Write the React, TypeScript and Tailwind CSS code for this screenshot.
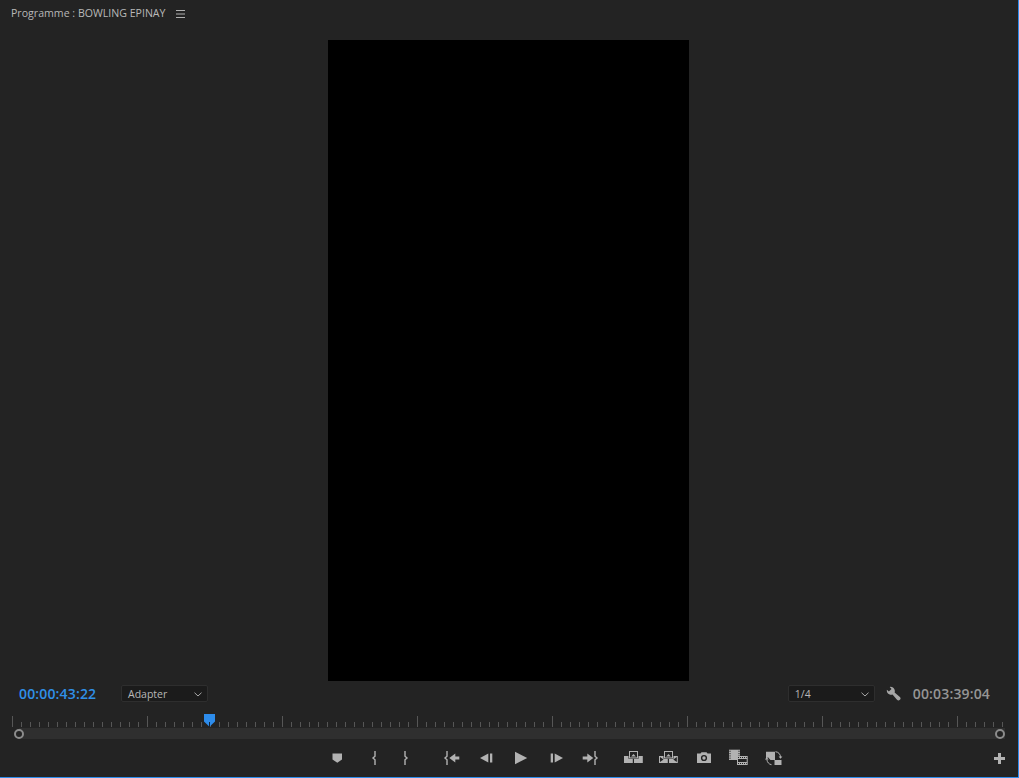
import React from "react";

const c = "#b2b2b2";
const d = "#232323";

function Icon({ className, children }: { className?: string; children: React.ReactNode }) {
  return (
    <svg width="24" height="24" viewBox="0 0 24 24" className={`shrink-0 ${className ?? ""}`}>
      {children}
    </svg>
  );
}

function Lift({ extract }: { extract?: boolean }) {
  return (
    <>
      <rect x="3" y="10" width="8.8" height="7" fill={c} />
      <rect x="13" y="10" width="8.8" height="7" fill={c} />
      <rect x="7.5" y="4.5" width="10" height="8.3" fill={d} />
      <rect x="8.5" y="5.5" width="8" height="6.4" fill="none" stroke={c} strokeWidth="1" />
      <path d="M10.2 10.6l2.3-2.6 2.3 2.6z" fill={c} />
      {extract && (
        <>
          <path d="M4 11v5l3.5-2.5z" fill={d} />
          <path d="M20.8 11v5l-3.5-2.5z" fill={d} />
        </>
      )}
    </>
  );
}

function Chevron() {
  return (
    <svg width="8" height="5" viewBox="0 0 8 5" className="shrink-0">
      <path d="M.5 .7L4 4l3.5-3.3" fill="none" stroke="#a8a8a8" strokeWidth="1" />
    </svg>
  );
}

const ticks = Array.from({ length: 111 }, (_, i) => i);

export default function App() {
  return (
    <div className="w-[1019px] h-[778px] flex flex-col bg-[#232323] border-r border-b border-[#2d8ceb] overflow-hidden font-['Open_Sans',sans-serif]">
      <header className="h-[27px] flex items-center pl-[11px] gap-[10px] text-[#b8b8b8] text-[10.6px]">
        <span>Programme : BOWLING EPINAY</span>
        <svg width="9" height="8" viewBox="0 0 9 8">
          <path d="M0 .5h9M0 4h9M0 7.5h9" stroke="#b0b0b0" strokeWidth="1" />
        </svg>
      </header>

      <div className="w-[361px] h-[641px] ml-[328px] mt-[13px] bg-black" />

      <div className="mt-[4px] h-[17px] flex items-center pl-[19px] pr-[28px]">
        <span className="w-[102px] text-[14px] tracking-[0.15px] font-semibold text-[#3090e8]">00:00:43:22</span>
        <div className="w-[87px] h-[17px] flex items-center justify-between pl-[6px] pr-[5px] pt-[2px] bg-[#1b1b1b] border border-[#2e2e2e] rounded-[2px] text-[10.5px] text-[#b8b8b8]">
          <span>Adapter</span>
          <Chevron />
        </div>
        <div className="ml-auto w-[87px] h-[17px] flex items-center justify-between pl-[6px] pr-[5px] pt-[2px] bg-[#1b1b1b] border border-[#2e2e2e] rounded-[2px] text-[10.5px] text-[#b8b8b8]">
          <span>1/4</span>
          <Chevron />
        </div>
        <svg width="15" height="15" viewBox="0 0 15 15" className="ml-[11px] shrink-0 mt-[-1px]">
          <path
            d="M3.7 .9L5.5 2.9 2.9 5.5 .9 3.7A4.3 4.3 0 0 0 6.5 8.6L11 13.8A2 2 0 0 0 13.9 11L8.6 6.5A4.3 4.3 0 0 0 3.7 .9Z"
            fill="#a6a6a6"
          />
        </svg>
        <span className="ml-[12px] text-[14px] tracking-[0.15px] font-semibold text-[#959595]">00:03:39:04</span>
      </div>

      <div className="relative mt-[14px] ml-[12px] w-[992px] h-[11px] flex items-end justify-between">
        {ticks.map((i) => (
          <div key={i} className={i % 15 === 0 ? "w-px h-[11px] bg-[#565656]" : "w-px h-[5px] bg-[#565656]"} />
        ))}
        <svg width="11" height="13" viewBox="0 0 11 13" className="absolute left-[192px] top-[-2px]">
          <path d="M0 0h11v7.5L5.5 12.8 0 7.5z" fill="#2d8ceb" />
          <path d="M5 8h1v5H5z" fill="#10243a" />
        </svg>
      </div>

      <div className="relative mt-[1px] ml-[19px] w-[986px] h-[11px] bg-[#2f2f2f]">
        <div className="absolute left-[-5px] top-[1px] w-[10px] h-[10px] rounded-full bg-[#232323] border-2 border-[#8c8c8c]" />
        <div className="absolute left-[976px] top-[1px] w-[10px] h-[10px] rounded-full bg-[#232323] border-2 border-[#8c8c8c]" />
      </div>

      <div className="mt-[7px] h-[24px] flex items-center pl-[325px] pr-[13px]">
        <Icon>
          <path d="M7.5 7.5h9.5v6l-4.7 3.2-4.8-3.2z" fill={c} />
        </Icon>
        <Icon className="ml-[13px]">
          <path d="M13 5v5.3L11 12l2 1.7V19" fill="none" stroke={c} strokeWidth="1.4" />
        </Icon>
        <Icon className="ml-[8px]">
          <path d="M11 5v5.3l2 1.7-2 1.7V19" fill="none" stroke={c} strokeWidth="1.4" />
        </Icon>
        <Icon className="ml-[22px]">
          <path d="M7 5v5.3L5 12l2 1.7V19" fill="none" stroke={c} strokeWidth="1.4" />
          <path d="M9.3 12l6-4.5v3h4v3h-4v3z" fill={c} />
        </Icon>
        <Icon className="ml-[10px]">
          <path d="M6 12l8.3-4.5v9z" fill={c} />
          <rect x="16" y="7.5" width="2.3" height="9" fill={c} />
        </Icon>
        <Icon className="ml-[11px]">
          <path d="M6 5.8L18.2 12 6 18.2z" fill={c} />
        </Icon>
        <Icon className="ml-[12px]">
          <rect x="5.7" y="7.5" width="2.3" height="9" fill={c} />
          <path d="M18 12L9.7 7.5v9z" fill={c} />
        </Icon>
        <Icon className="ml-[9px]">
          <path d="M15.3 12l-6-4.5v3h-4.6v3h4.6v3z" fill={c} />
          <path d="M17 5v5.3l2 1.7-2 1.7V19" fill="none" stroke={c} strokeWidth="1.4" />
        </Icon>
        <Icon className="ml-[19px]">
          <Lift />
        </Icon>
        <Icon className="ml-[11px]">
          <Lift extract />
        </Icon>
        <Icon className="ml-[12px]">
          <path d="M5 7.5h3.5l1-1.2h5l1 1.2H19V17H5z" fill={c} />
          <circle cx="12" cy="12" r="2.4" fill="none" stroke={d} strokeWidth="1.4" />
        </Icon>
        <Icon className="ml-[10px]">
          <rect x="3" y="3.7" width="11" height="10.3" fill={c} />
          <path d="M4 4.7v1.2M4 7v1.2M4 9.3v1.2M4 11.6v1.2M13 4.7v1.2M13 7v1.2M13 9.3v1.2M13 11.6v1.2" stroke={d} strokeWidth="1" />
          <rect x="11.5" y="10.5" width="9.7" height="8" fill={d} stroke={c} strokeWidth="1" />
          <path d="M11.5 12.5h9.7M11.5 16.5h9.7M13.5 10.5v2M15.5 10.5v2M17.5 10.5v2M19.5 10.5v2M13.5 16.5v2M15.5 16.5v2M17.5 16.5v2M19.5 16.5v2" stroke={c} strokeWidth="1" fill="none" />
        </Icon>
        <Icon className="ml-[11px]">
          <path d="M5 5.7h9v8.3H9.5L7 11.2 5 13z" fill={c} />
          <rect x="13.5" y="14" width="7" height="5" fill={c} />
          <path d="M14.5 5.7c3 .4 5 2.4 5 5.5M10.5 18.7c-2.4-.3-4.4-2.4-4.7-5.4" fill="none" stroke={c} strokeWidth="1" />
          <path d="M17.6 10.5h3.8l-1.9 2.2zM3.9 13.5h3.8l-1.9-2.2z" fill={c} />
        </Icon>
        <svg width="11" height="11" viewBox="0 0 11 11" className="ml-auto">
          <path d="M4 0h3v4h4v3H7v4H4V7H0V4h4z" fill={c} />
        </svg>
      </div>
    </div>
  );
}
